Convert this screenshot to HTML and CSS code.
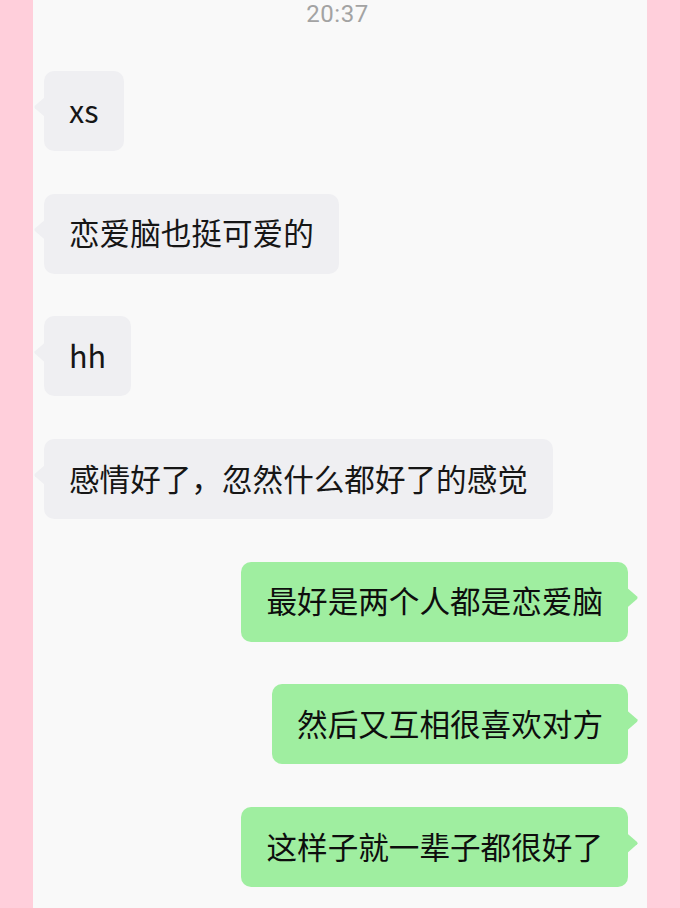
FILE: index.html
```html
<!DOCTYPE html>
<html lang="zh-CN">
<head>
<meta charset="utf-8">
<link rel="stylesheet" href="styles.css">
</head>
<body>
<div class="page">
  <div class="side"></div>
  <main class="chat">
    <div class="time">20:37</div>
    <div class="list">
      <div class="row left"><div class="bubble in">xs</div></div>
      <div class="row left"><div class="bubble in">恋爱脑也挺可爱的</div></div>
      <div class="row left"><div class="bubble in">hh</div></div>
      <div class="row left"><div class="bubble in">感情好了，忽然什么都好了的感觉</div></div>
      <div class="row right"><div class="bubble out">最好是两个人都是恋爱脑</div></div>
      <div class="row right"><div class="bubble out">然后又互相很喜欢对方</div></div>
      <div class="row right"><div class="bubble out">这样子就一辈子都很好了</div></div>
    </div>
  </main>
  <div class="side"></div>
</div>
</body>
</html>
```
FILE: styles.css
```css
html, body {
  margin: 0;
  padding: 0;
}
body {
  width: 680px;
  height: 908px;
  overflow: hidden;
  background: #ffcfdb;
  font-family: "Noto Sans CJK SC", "Noto Sans", sans-serif;
}
.page {
  display: flex;
  height: 908px;
}
.side {
  width: 33px;
  flex: none;
  background: #ffcfdb;
}
.chat {
  width: 614px;
  flex: none;
  background: #f9f9f9;
  display: flex;
  flex-direction: column;
}
.time {
  font-family: Roboto, "Liberation Sans", sans-serif;
  font-size: 24px;
  line-height: 28px;
  color: #a3a3a3;
  text-align: center;
  letter-spacing: 0.5px;
  height: 28px;
  margin-left: -5px;
}
.list {
  margin-top: 43px;
  display: flex;
  flex-direction: column;
  gap: 42.7px;
}
.row {
  display: flex;
}
.row.left {
  justify-content: flex-start;
  padding-left: 11px;
}
.row.right {
  justify-content: flex-end;
  padding-right: 19px;
}
.bubble {
  position: relative;
  height: 80px;
  box-sizing: border-box;
  padding: 0 25px 3px;
  display: flex;
  align-items: center;
  font-size: 30.6px;
  font-weight: 400;
  border-radius: 10px;
  white-space: nowrap;
}
.bubble.in {
  background: #efeff2;
  color: #161616;
}
.bubble.out {
  background: #9feea0;
  color: #0e0e0e;
}
.bubble::before {
  content: "";
  position: absolute;
  top: 26px;
  width: 11px;
  height: 20px;
}
.bubble.in::before {
  left: -10px;
  background: #efeff2;
  clip-path: polygon(100% 0, 8% 44%, 4% 50%, 8% 56%, 100% 100%);
}
.bubble.out::before {
  right: -10px;
  background: #9feea0;
  clip-path: polygon(0 0, 92% 44%, 96% 50%, 92% 56%, 0 100%);
}
```
